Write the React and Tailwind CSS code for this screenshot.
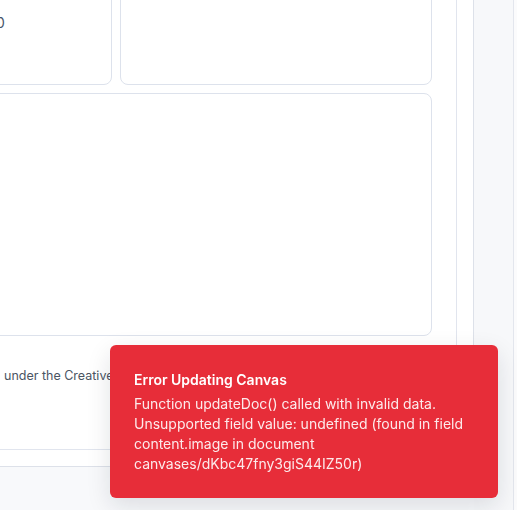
import React from 'react';

function Toast() {
  return (
    <div className="fixed right-[19px] bottom-[12px] w-[388px] rounded-md bg-[#e72d39] px-6 pt-[25px] pb-6 text-white shadow-[0_8px_24px_rgba(15,23,42,0.12)]">
      <div className="text-sm font-semibold leading-5">Error Updating Canvas</div>
      <div className="mt-1 text-sm leading-5 text-white/90">
        Function updateDoc() called with invalid data. Unsupported field value: undefined (found in field content.image in document
        canvases/dKbc47fny3giS44IZ50r)
      </div>
    </div>
  );
}

export default function App() {
  return (
    <div className="relative flex h-[510px] w-[517px] overflow-hidden bg-[#f8f9fb] font-['Inter',sans-serif]">
      <div className="flex w-[474px] flex-col">
        <div className="flex h-[467px] border-r border-b border-[#dde1e9] bg-white pr-4 pb-4">
          <div className="flex-1 overflow-hidden border-r border-b border-[#e1e5ee]">
            <div className="-mt-3 -ml-3 flex flex-col gap-2 pr-6">
              <div className="flex h-[97px] gap-2">
                <div className="w-[124px] rounded-lg border border-[#dde2ec] bg-white pt-6 pl-[7px] text-sm text-[#475569]">
                  0
                </div>
                <div className="flex-1 rounded-lg border border-[#dde2ec] bg-white"></div>
              </div>
              <div className="h-[243px] rounded-lg border border-[#dde2ec] bg-white"></div>
              <div className="pt-[22px] pl-4 text-[12.5px] leading-5 whitespace-nowrap text-[#4b5563]">
                under the Creative
              </div>
            </div>
          </div>
        </div>
      </div>
      <div className="w-[40px] border-r border-[#e3e6ed] bg-[#f7f8fa]"></div>
      <div className="flex-1 bg-[#fbfbfc]"></div>
      <Toast />
    </div>
  );
}
